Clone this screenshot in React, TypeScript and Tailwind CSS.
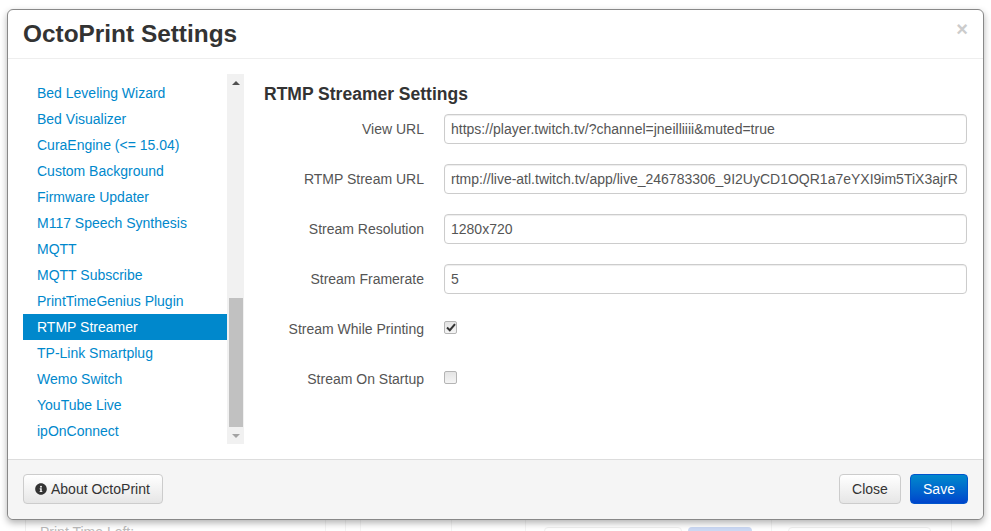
import React from "react";

const plugins = [
  "Bed Leveling Wizard",
  "Bed Visualizer",
  "CuraEngine (<= 15.04)",
  "Custom Background",
  "Firmware Updater",
  "M117 Speech Synthesis",
  "MQTT",
  "MQTT Subscribe",
  "PrintTimeGenius Plugin",
  "RTMP Streamer",
  "TP-Link Smartplug",
  "Wemo Switch",
  "YouTube Live",
  "ipOnConnect",
];

const fields = [
  { label: "View URL", value: "https://player.twitch.tv/?channel=jneilliiii&muted=true" },
  { label: "RTMP Stream URL", value: "rtmp://live-atl.twitch.tv/app/live_246783306_9I2UyCD1OQR1a7eYXI9im5TiX3ajrR" },
  { label: "Stream Resolution", value: "1280x720" },
  { label: "Stream Framerate", value: "5" },
];

function Check({ checked }: { checked?: boolean }) {
  return (
    <div className="relative ml-5 mt-[7px] h-[13px] w-[13px]">
      <input
        type="checkbox"
        readOnly
        checked={!!checked}
        className="block h-[13px] w-[13px] appearance-none rounded-[2px] border border-[#b4b4b4] bg-gradient-to-b from-[#e4e4e4] to-[#f4f4f4]"
      />
      {checked && (
        <svg className="absolute left-[2px] top-[2px]" width="10" height="9" viewBox="0 0 10 9" fill="none">
          <path d="M1 4.5 L3.8 7.2 L9 1.2" stroke="#333" strokeWidth="2" />
        </svg>
      )}
    </div>
  );
}

function Backdrop() {
  return (
    <div className="h-[531px] w-[991px] overflow-hidden bg-white">
      <div className="mt-[519px] flex h-3 pl-[25px] text-[14px] leading-5 text-[#bbb]">
        <div className="w-[300px] border-l border-[#f0f0f0] pl-[14px] pt-[3px]">Print Time Left:</div>
        <div className="w-5 border-l border-[#f4f4f4]" />
        <div className="w-[15px] border-l border-[#f4f4f4]" />
        <div className="w-[91px] border-l border-[#f4f4f4]" />
        <div className="w-[74px] border-l border-[#f4f4f4]" />
        <div className="flex w-[246px] gap-[6px] border-l border-[#f4f4f4] pl-[18px] pt-2">
          <div className="h-2 w-[138px] rounded-t-[4px] border border-[#f0f0f0]" />
          <div className="h-2 w-16 rounded-t-[4px] bg-[#ccd9f4]" />
        </div>
        <div className="w-[180px] border-l border-[#f4f4f4] pl-4 pt-2">
          <div className="h-2 w-[143px] rounded-t-[4px] border border-[#f0f0f0]" />
        </div>
        <div className="w-4 border-l border-[#f4f4f4]" />
      </div>
    </div>
  );
}

export default function App() {
  return (
    <div className="relative h-[531px] w-[991px] overflow-hidden font-['Liberation_Sans',Arial,sans-serif] text-[14px] text-[#333]">
      <Backdrop />
      <div className="absolute left-[7px] top-[9px] flex h-[511px] w-[977px] flex-col rounded-[6px] border border-[#888] bg-white shadow-[0_3px_7px_rgba(0,0,0,0.3)]">
        <div className="relative h-[49px] shrink-0 border-b border-[#eee] pl-[15px] pt-[7px]">
          <h3 className="text-[24.4px] font-bold leading-[34px] text-[#333]">OctoPrint Settings</h3>
          <span className="absolute right-[15px] top-[9px] text-[20px] font-bold leading-5 text-[#ccc]">×</span>
        </div>
        <div className="flex min-h-0 flex-1 pl-[15px] pt-[15px]">
          <div className="relative h-[370px] w-[204px] shrink-0 overflow-hidden">
            <ul className="pt-[6px]">
              {plugins.map((p) =>
                p === "RTMP Streamer" ? (
                  <li key={p} className="h-[26px] bg-[#0088cc] pl-[14px] leading-[26px] text-white">{p}</li>
                ) : (
                  <li key={p} className="h-[26px] pl-[14px] leading-[26px] text-[#0088cc]">{p}</li>
                )
              )}
            </ul>
          </div>
          <div className="flex h-[370px] w-[17px] shrink-0 flex-col bg-[#f1f1f1]">
            <div className="flex h-[17px] items-center justify-center">
              <div className="h-0 w-0 border-x-[4px] border-b-[4px] border-x-transparent border-b-[#505050]" />
            </div>
            <div className="flex-1" />
            <div className="mx-auto h-[129px] w-[14px] bg-[#c1c1c1]" />
            <div className="flex h-[17px] items-center justify-center">
              <div className="h-0 w-0 border-x-[4px] border-t-[4px] border-x-transparent border-t-[#a3a3a3]" />
            </div>
          </div>
          <div className="flex-1 pl-5">
            <h3 className="mt-[10px] text-[17.5px] font-bold leading-5 text-[#333]">RTMP Streamer Settings</h3>
            <div className="mt-[10px] flex flex-col">
              {fields.map((f) => (
                <div key={f.label} className="flex h-[50px] items-start">
                  <label className="w-[160px] shrink-0 pt-[5px] text-right leading-5 text-[#555]">{f.label}</label>
                  <input
                    readOnly
                    value={f.value}
                    className="ml-5 h-[30px] w-[523px] rounded-[4px] border border-[#ccc] px-[6px] text-[14px] text-[#555] shadow-[inset_0_1px_1px_rgba(0,0,0,0.075)] outline-none"
                  />
                </div>
              ))}
              <div className="flex h-[50px] items-start">
                <label className="w-[160px] shrink-0 pt-[5px] text-right leading-5 text-[#555]">Stream While Printing</label>
                <Check checked />
              </div>
              <div className="flex h-[50px] items-start">
                <label className="w-[160px] shrink-0 pt-[5px] text-right leading-5 text-[#555]">Stream On Startup</label>
                <Check />
              </div>
            </div>
          </div>
        </div>
        <div className="flex h-[60px] shrink-0 items-start justify-between rounded-b-[6px] border-t border-[#ddd] bg-[#f5f5f5] px-[15px] pt-[14px]">
          <button className="flex h-[30px] w-[140px] items-center gap-1 rounded-[4px] border border-[#ccc] bg-gradient-to-b from-white to-[#e6e6e6] pl-[11px] text-[14px] text-[#333]">
            <svg width="12" height="12" viewBox="0 0 512 512" fill="#333">
              <path d="M256 8C119 8 8 119 8 256s111 248 248 248 248-111 248-248S393 8 256 8zm0 110a42 42 0 1 1 0 84 42 42 0 0 1 0-84zm56 254c0 7-5 12-12 12h-88c-7 0-12-5-12-12v-24c0-7 5-12 12-12h12v-64h-12c-7 0-12-5-12-12v-24c0-7 5-12 12-12h64c7 0 12 5 12 12v100h12c7 0 12 5 12 12v24z" />
            </svg>
            About OctoPrint
          </button>
          <div className="flex gap-[9px]">
            <button className="h-[30px] w-[62px] rounded-[4px] border border-[#ccc] bg-gradient-to-b from-white to-[#e6e6e6] text-[14px] text-[#333]">Close</button>
            <button className="h-[30px] w-[58px] rounded-[4px] border border-[#0055cc] bg-gradient-to-b from-[#0088cc] to-[#0044cc] text-[14px] text-white">Save</button>
          </div>
        </div>
      </div>
    </div>
  );
}
